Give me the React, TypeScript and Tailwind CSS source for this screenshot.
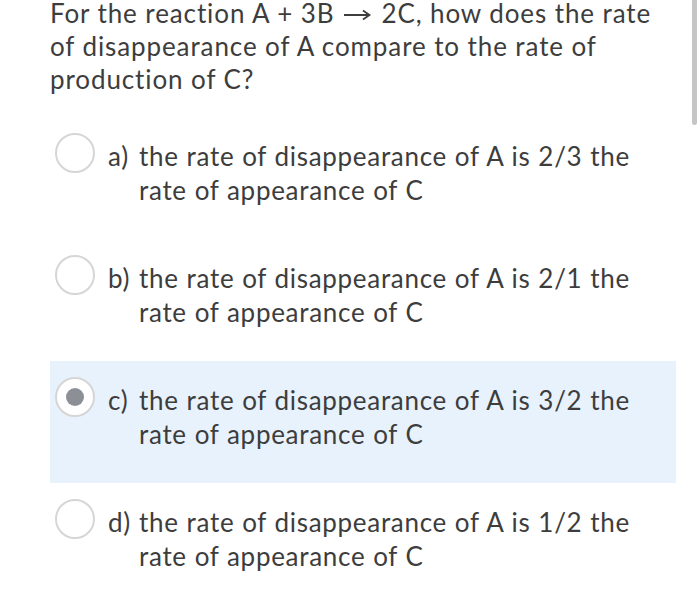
const options = [
  { label: "a)", line1: "the rate of disappearance of A is 2/3 the", line2: "rate of appearance of C", selected: false },
  { label: "b)", line1: "the rate of disappearance of A is 2/1 the", line2: "rate of appearance of C", selected: false },
  { label: "c)", line1: "the rate of disappearance of A is 3/2 the", line2: "rate of appearance of C", selected: true },
  { label: "d)", line1: "the rate of disappearance of A is 1/2 the", line2: "rate of appearance of C", selected: false },
];

const Radio = ({ checked }: { checked: boolean }) => (
  <div className="w-[40px] h-[40px] shrink-0 rounded-full border-2 border-[#d6d6d6] bg-white flex items-center justify-center">
    {checked && <div className="w-[18px] h-[18px] rounded-full bg-[#8c9096]" />}
  </div>
);

const Arrow = () => (
  <svg width="27" height="12" viewBox="0 0 27 12" className="inline-block mx-[10px] align-[2px]">
    <path d="M0 6H25M19 1.5L25.5 6L19 10.5" fill="none" stroke="#3d3d3d" strokeWidth="1.8" />
  </svg>
);

export default function App() {
  return (
    <div className="relative w-[700px] h-[594px] overflow-hidden bg-white text-[#3d3d3d] font-['Lato',sans-serif]">
      {/* scrollbar */}
      <div className="absolute right-[3px] top-0 w-[5px] h-[125px] rounded-b-full bg-[#c6c6c6]" />

      <div className="pl-[50px] pr-[24px]">
        <p className="text-[26px] leading-[33px] tracking-[0.9px] whitespace-nowrap -mt-[3px] mb-[21px]">
          For the reaction A + 3B<Arrow />2C, how does the rate
          <br />
          of disappearance of A compare to the rate of
          <br />
          production of C?
        </p>

        <div className="flex flex-col">
          {options.map((o) => (
            <div
              key={o.label}
              className={`h-[122px] flex items-start pl-[5px] pr-[20px] ${o.selected ? "bg-[#e8f2fc]" : ""}`}
            >
              <div className="mt-[16px]">
                <Radio checked={o.selected} />
              </div>
              <div className="flex mt-[22px] ml-[13px] text-[26px] leading-[34px] tracking-[0.7px] [word-spacing:0.5px] whitespace-nowrap">
                <span className="w-[31px] shrink-0">{o.label}</span>
                <span>
                  {o.line1}
                  <br />
                  {o.line2}
                </span>
              </div>
            </div>
          ))}
        </div>
      </div>
    </div>
  );
}
